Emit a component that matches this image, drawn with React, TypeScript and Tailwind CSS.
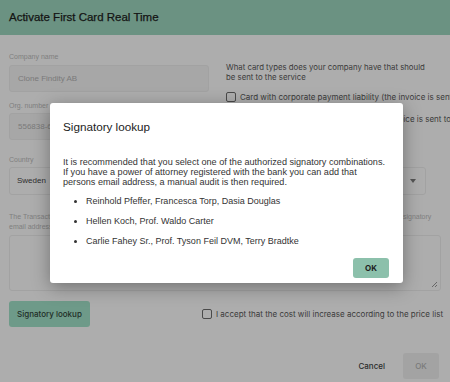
import React from "react";

const Check = ({ className = "" }: { className?: string }) => (
  <span className={"inline-block w-[10px] h-[10px] rounded-[2px] border border-[#4a4a4a] shrink-0 " + className} />
);

export default function App() {
  return (
    <div className="relative w-[450px] h-[382px] overflow-hidden bg-[#adadad] font-['Liberation_Sans',Arial,sans-serif]">
      <div className="h-[35px] bg-[#6b9282] flex items-center pl-[9px]">
        <h1 className="text-[11.5px] text-[#141414] [-webkit-text-stroke:0.25px_#141414]">Activate First Card Real Time</h1>
      </div>

      <div className="px-[9px] pt-[16px]">
        <div className="flex gap-[17px]">
          <div className="w-[200px] shrink-0">
            <div className="text-[7px] text-[#7f7f7f] h-[11px] leading-[11px]">Company name</div>
            <div className="mt-[3px] h-[27px] rounded-[3px] border border-[#a2a2a2] bg-[#a7a7a7] flex items-center pl-[8px] text-[8px] text-[#7a7a7a]">Clone Findity AB</div>
            <div className="mt-[8px] text-[7px] text-[#7f7f7f] h-[11px] leading-[11px]">Org. number</div>
            <div className="mt-[2px] h-[27px] rounded-[3px] border border-[#a2a2a2] bg-[#a7a7a7] flex items-center pl-[8px] text-[8px] text-[#7a7a7a]">556838-6000</div>
          </div>
          <div className="flex-1 pt-[12px] font-['Inter',sans-serif] text-[#3b3b3b] whitespace-nowrap">
            <div className="text-[7.8px] leading-[9.5px]">What card types does your company have that should<br />be sent to the service</div>
            <div className="mt-[9px] flex items-center gap-[4px] text-[8px]">
              <Check />
              <span>Card with corporate payment liability (the invoice is sent to the company)</span>
            </div>
            <div className="mt-[10px] flex items-center gap-[4px] text-[8px]">
              <Check />
              <span>Card with private payment liability (the invoice is sent to the cardholder)</span>
            </div>
          </div>
        </div>

        <div className="mt-[14px] flex gap-[17px] w-[417px]">
          <div className="flex-1">
            <div className="text-[7px] text-[#7f7f7f] h-[11px] leading-[11px]">Country</div>
            <div className="mt-[2px] h-[28px] rounded-[3px] border border-[#a2a2a2] flex items-center pl-[7px] text-[8px] text-[#2e2e2e]">Sweden</div>
          </div>
          <div className="flex-1">
            <div className="text-[7px] text-[#7f7f7f] h-[11px] leading-[11px]">Language</div>
            <div className="mt-[2px] h-[28px] rounded-[3px] border border-[#a2a2a2] flex items-center justify-end pr-[9px]">
              <svg width="6" height="4" viewBox="0 0 6 4"><path d="M0 0h6L3 4z" fill="#555" /></svg>
            </div>
          </div>
        </div>

        <div className="mt-[17px] text-[7px] leading-[10px] text-[#7f7f7f] whitespace-nowrap">
          The Transaction Manager agreement will be sent by email for digital signing to the company's registered and legally authorized signatory
          <br />
          email addresses entered below
        </div>
        <div className="relative mt-[3px] h-[56px] rounded-[3px] border border-[#a2a2a2]">
          <svg className="absolute right-[2px] bottom-[2px]" width="7" height="7" viewBox="0 0 7 7"><path d="M6 1L1 6M6 4L4 6" stroke="#555" strokeWidth="0.8" /></svg>
        </div>

        <div className="mt-[10px] flex items-center justify-between">
          <button className="h-[26px] px-[8px] rounded-[3px] bg-[#6e9a89] text-[8px] font-medium text-[#1e2d27] font-['Inter',sans-serif]">Signatory lookup</button>
          <div className="flex items-center gap-[4px] text-[8px] text-[#3b3b3b] font-['Inter',sans-serif] mr-[-2px]">
            <Check />
            <span>I accept that the cost will increase according to the price list</span>
          </div>
        </div>

        <div className="mt-[26px] flex items-center justify-end gap-[18px] pr-[2px] font-['Inter',sans-serif]">
          <span className="text-[8px] font-medium text-[#2b2b2b]">Cancel</span>
          <button className="w-[36px] h-[26px] rounded-[3px] bg-[#a3a3a3] text-[8px] font-medium text-[#7a7a7a]">OK</button>
        </div>
      </div>

      {/* modal */}
      <div className="absolute left-[50px] top-[103px] w-[353px] h-[180px] bg-white rounded-[3px] shadow-[0_4px_18px_rgba(0,0,0,0.35)] pl-[13px] pr-[12px] pt-[16px] flex flex-col">
        <h2 className="text-[11.7px] text-[#1d1d1d] leading-[15px]">Signatory lookup</h2>
        <p className="mt-[23px] text-[9.1px] leading-[10px] text-[#333]">
          It is recommended that you select one of the authorized signatory combinations. If you have a power of attorney registered with the bank you can add that persons email address, a manual audit is then required.
        </p>
        <ul className="mt-[9px] pl-[23px] text-[9px] text-[#333] flex flex-col gap-[10px] list-disc">
          <li className="leading-[10px]">Reinhold Pfeffer, Francesca Torp, Dasia Douglas</li>
          <li className="leading-[10px]">Hellen Koch, Prof. Waldo Carter</li>
          <li className="leading-[10px]">Carlie Fahey Sr., Prof. Tyson Feil DVM, Terry Bradtke</li>
        </ul>
        <div className="mt-auto mb-[5px] pr-[2px] flex justify-end">
          <button className="w-[36px] h-[20px] rounded-[3px] bg-[#8cc0ab] text-[8px] font-bold text-[#1d1d1d] font-['Inter',sans-serif]">OK</button>
        </div>
      </div>
    </div>
  );
}
